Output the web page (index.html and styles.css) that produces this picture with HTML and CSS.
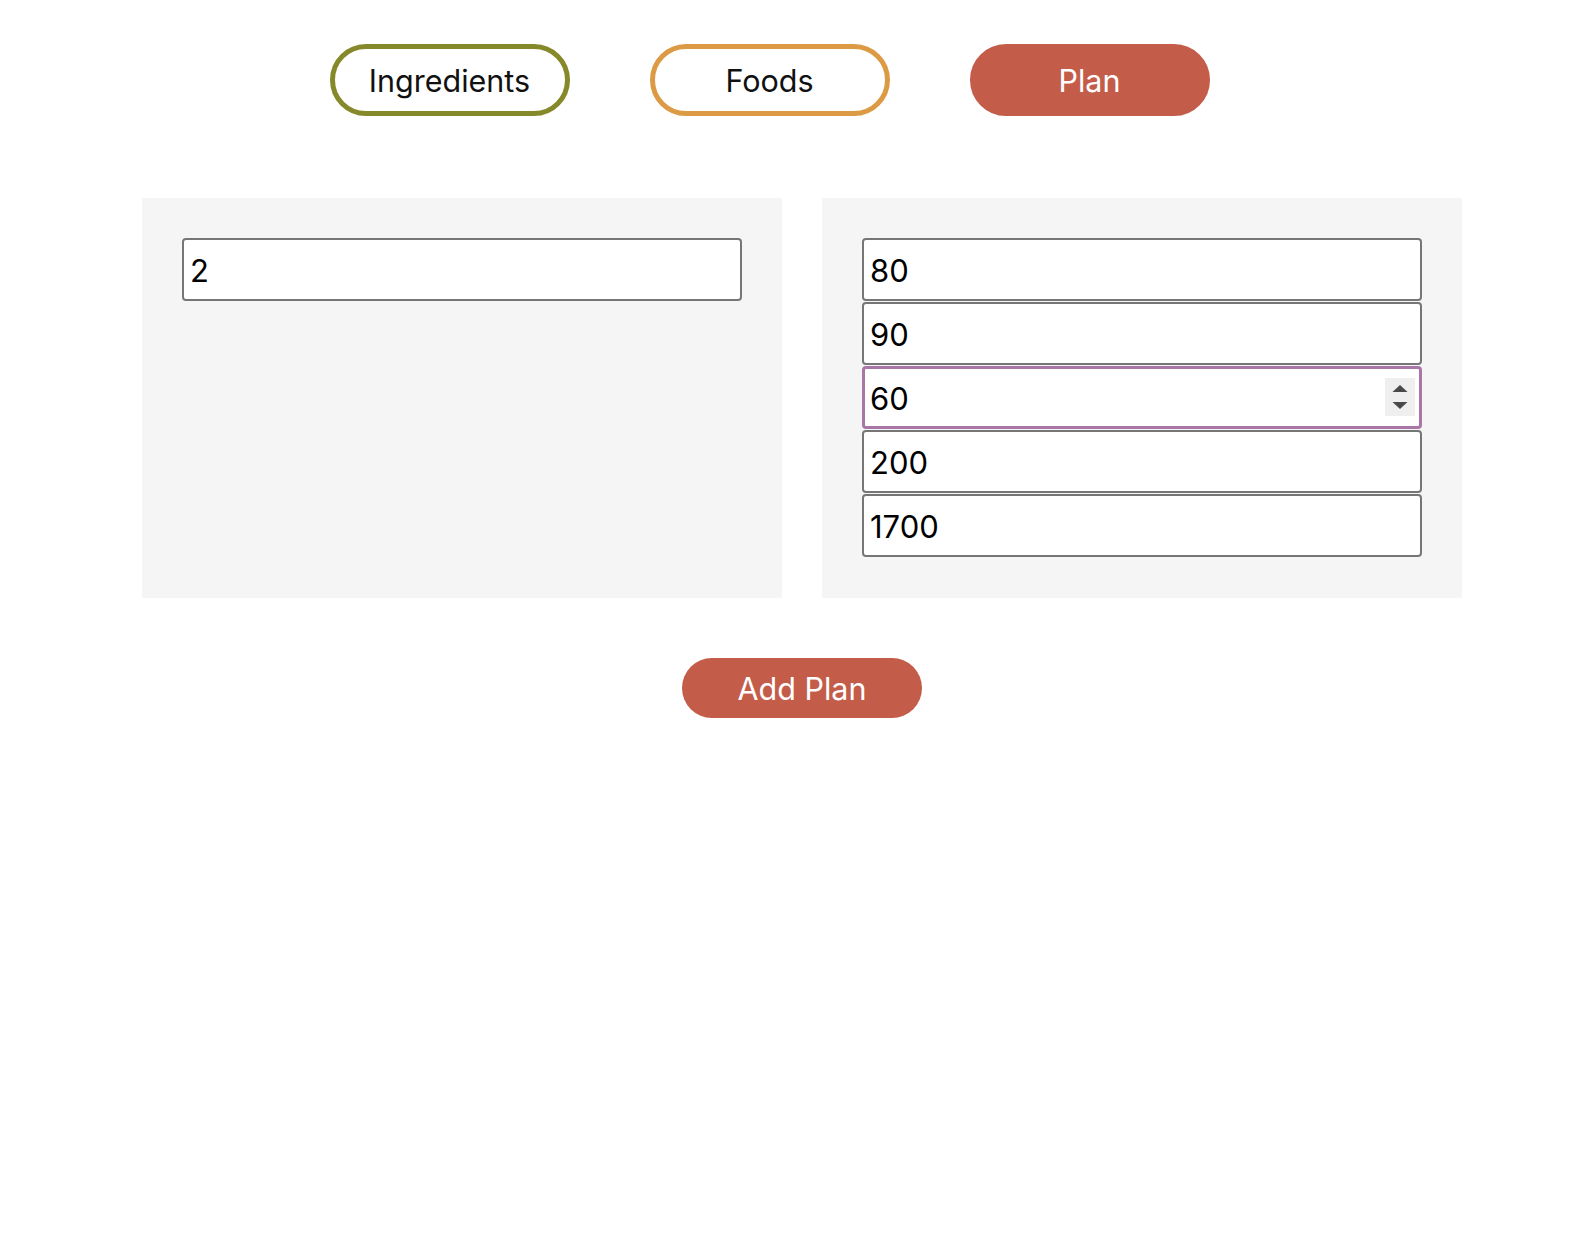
FILE: index.html
```html
<!DOCTYPE html>
<html lang="en">
<head>
<meta charset="utf-8">
<title>Plan</title>
<link rel="stylesheet" href="styles.css">
</head>
<body>
  <nav class="nav">
    <button class="tab tab-ingredients">Ingredients</button>
    <button class="tab tab-foods">Foods</button>
    <button class="tab tab-plan">Plan</button>
  </nav>

  <main class="panels">
    <section class="panel">
      <input class="field" type="text" value="2">
    </section>
    <section class="panel">
      <div class="stack">
        <input class="field" type="text" value="80">
        <input class="field" type="text" value="90">
        <div class="field-wrap">
          <input class="field field-focus" type="text" value="60">
          <div class="spinner">
            <svg width="30" height="38" viewBox="0 0 30 38">
              <path d="M7.5 14 L15 7 L22.5 14 Z" fill="#4a4a4a"/>
              <path d="M7.5 24 L15 31 L22.5 24 Z" fill="#4a4a4a"/>
            </svg>
          </div>
        </div>
        <input class="field" type="text" value="200">
        <input class="field" type="text" value="1700">
      </div>
    </section>
  </main>

  <div class="actions">
    <button class="add-btn">Add Plan</button>
  </div>
</body>
</html>
```

FILE: styles.css
```css
* {
  box-sizing: border-box;
}

body {
  margin: 0;
  background: #ffffff;
  font-family: Inter, "Noto Sans", "Liberation Sans", sans-serif;
  color: #111111;
}

.nav {
  display: flex;
  justify-content: center;
  gap: 80px;
  padding: 44px 47px 0 0;
}

.tab {
  width: 240px;
  height: 72px;
  border-radius: 36px;
  border: 5px solid transparent;
  background: #ffffff;
  font-family: inherit;
  font-size: 30.5px;
  color: #111111;
  padding: 1px 0 0 0;
  cursor: pointer;
}

.tab-ingredients {
  border-color: #86892a;
}

.tab-foods {
  border-color: #dc9a45;
}

.tab-plan {
  background: #c45c4a;
  border-color: #c45c4a;
  color: #ffffff;
}

.panels {
  display: flex;
  justify-content: center;
  gap: 40px;
  margin-top: 82px;
  padding-left: 18px;
}

.panel {
  width: 640px;
  height: 400px;
  padding: 40px 40px;
  background: #f5f5f5;
}

.stack {
  display: flex;
  flex-direction: column;
  gap: 1px;
}

.field {
  display: block;
  width: 560px;
  height: 63px;
  border: 2px solid #767676;
  border-radius: 4px;
  background: #ffffff;
  font-family: inherit;
  font-size: 31px;
  color: #000000;
  padding: 2px 6px 0 6px;
  outline: none;
}

.field-wrap {
  position: relative;
}

.field-focus {
  border: 3px solid #a877a8;
  padding: 2px 5px 0 5px;
}

.spinner {
  position: absolute;
  top: 12px;
  right: 7px;
  width: 30px;
  height: 38px;
  background: #efefef;
}

.spinner svg {
  display: block;
}

.actions {
  display: flex;
  justify-content: center;
  margin-top: 60px;
  padding-left: 18px;
}

.add-btn {
  width: 240px;
  height: 60px;
  border: none;
  border-radius: 30px;
  background: #c45c4a;
  color: #ffffff;
  font-family: inherit;
  font-size: 30.5px;
  padding: 1px 0 0 0;
  cursor: pointer;
}
```
